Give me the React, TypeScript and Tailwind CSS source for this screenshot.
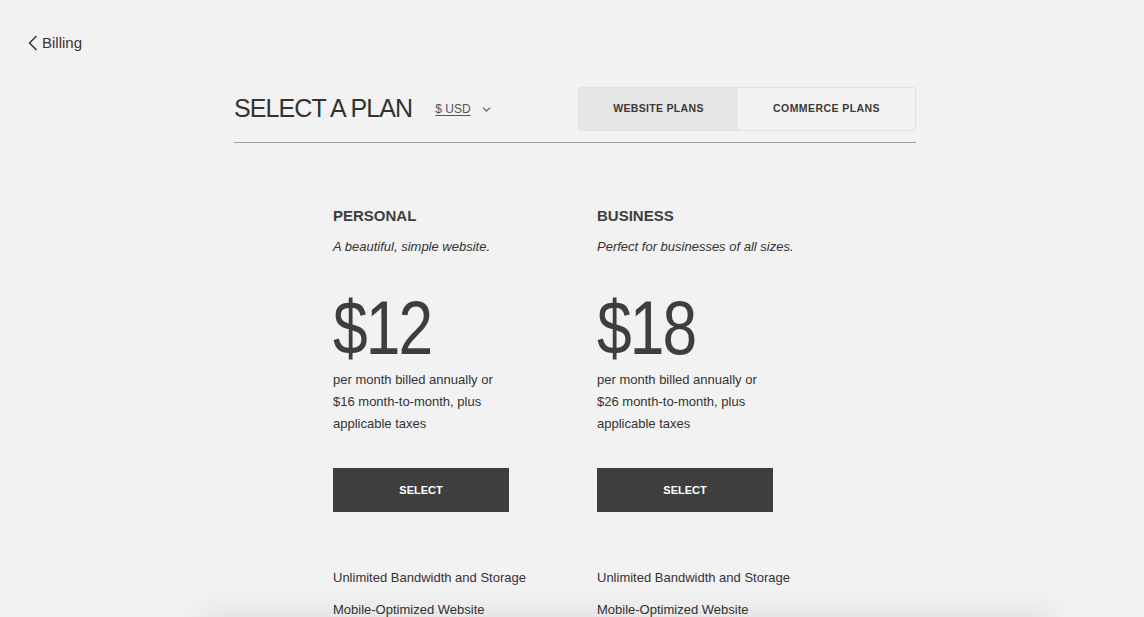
import { ChevronDown } from "lucide-react";

const plans = [
  {
    name: "PERSONAL",
    tagline: "A beautiful, simple website.",
    price: "$12",
    monthly: "$16",
  },
  {
    name: "BUSINESS",
    tagline: "Perfect for businesses of all sizes.",
    price: "$18",
    monthly: "$26",
  },
];

const features = [
  "Unlimited Bandwidth and Storage",
  "Mobile-Optimized Website",
  "SSL Security",
  "24/7 Customer Support",
];

function PlanColumn({ plan }: { plan: (typeof plans)[number] }) {
  return (
    <div className="w-[264px] shrink-0">
      <h2 className="mt-[63px] text-[15px] leading-[20px] font-bold text-[#3e3e3e]">
        {plan.name}
      </h2>
      <p className="mt-[11px] text-[13px] leading-[20px] italic text-[#333]">
        {plan.tagline}
      </p>
      <div className="mt-[33px] origin-left scale-x-[0.82] text-[76px] leading-none tracking-[-0.03em] text-[#3e3e3e]">
        {plan.price}
      </div>
      <p className="mt-[3px] text-[13px] leading-[22px] text-[#333]">
        per month billed annually or
        <br />
        {plan.monthly} month-to-month, plus
        <br />
        applicable taxes
      </p>
      <button className="mt-[33px] flex h-[44px] w-[176px] items-center justify-center bg-[#3e3e3e] text-[11px] font-bold text-white">
        SELECT
      </button>
      <ul className="mt-[56px] flex flex-col gap-[12px] text-[13px] leading-[20px] text-[#333]">
        {features.map((f) => (
          <li key={f}>{f}</li>
        ))}
      </ul>
    </div>
  );
}

export default function App() {
  return (
    <div
      className="min-h-screen bg-[#f2f2f2] pb-20"
      style={{ fontFamily: '"Liberation Sans", Arial, sans-serif' }}
    >
      <div className="px-[28px] pt-[33px]">
        <a className="flex items-center gap-[4px] text-[15px] leading-[20px] text-[#333]">
          <svg width="10" height="16" viewBox="0 0 10 16" fill="none">
            <path d="M8.5 1 L1.5 8 L8.5 15" stroke="#333" strokeWidth="1.5" />
          </svg>
          Billing
        </a>
      </div>

      <div className="mx-auto w-[682px] translate-x-[3px]">
        <div className="mt-[34px] flex items-center border-b border-[#9c9c9c] pb-[11px]">
          <h1 className="mb-[2px] text-[25px] leading-none tracking-[-0.9px] text-[#333]">
            SELECT A PLAN
          </h1>
          <div className="ml-[23px] flex items-center gap-[9px] text-[12px] text-[#555]">
            <span className="underline underline-offset-2">$ USD</span>
            <ChevronDown size={13} strokeWidth={2.5} className="text-[#666]" />
          </div>
          <div className="ml-auto flex h-[44px] overflow-hidden rounded-[3px] border border-[#e0e0e0]">
            <div className="flex w-[159px] items-center justify-center bg-[#e6e6e6] text-[10.5px] font-bold tracking-[0.03em] text-[#3a3a3a]">
              WEBSITE PLANS
            </div>
            <div className="flex w-[177px] items-center justify-center bg-[#f2f2f2] text-[10.5px] font-bold tracking-[0.04em] text-[#3a3a3a]">
              COMMERCE PLANS
            </div>
          </div>
        </div>

        <div className="flex pl-[99px]">
          {plans.map((p) => (
            <PlanColumn key={p.name} plan={p} />
          ))}
        </div>
      </div>

      <div className="fixed bottom-[-40px] left-[200px] right-[90px] h-[40px] bg-[#f2f2f2] shadow-[0_-6px_28px_rgba(0,0,0,0.07)]" />
    </div>
  );
}
